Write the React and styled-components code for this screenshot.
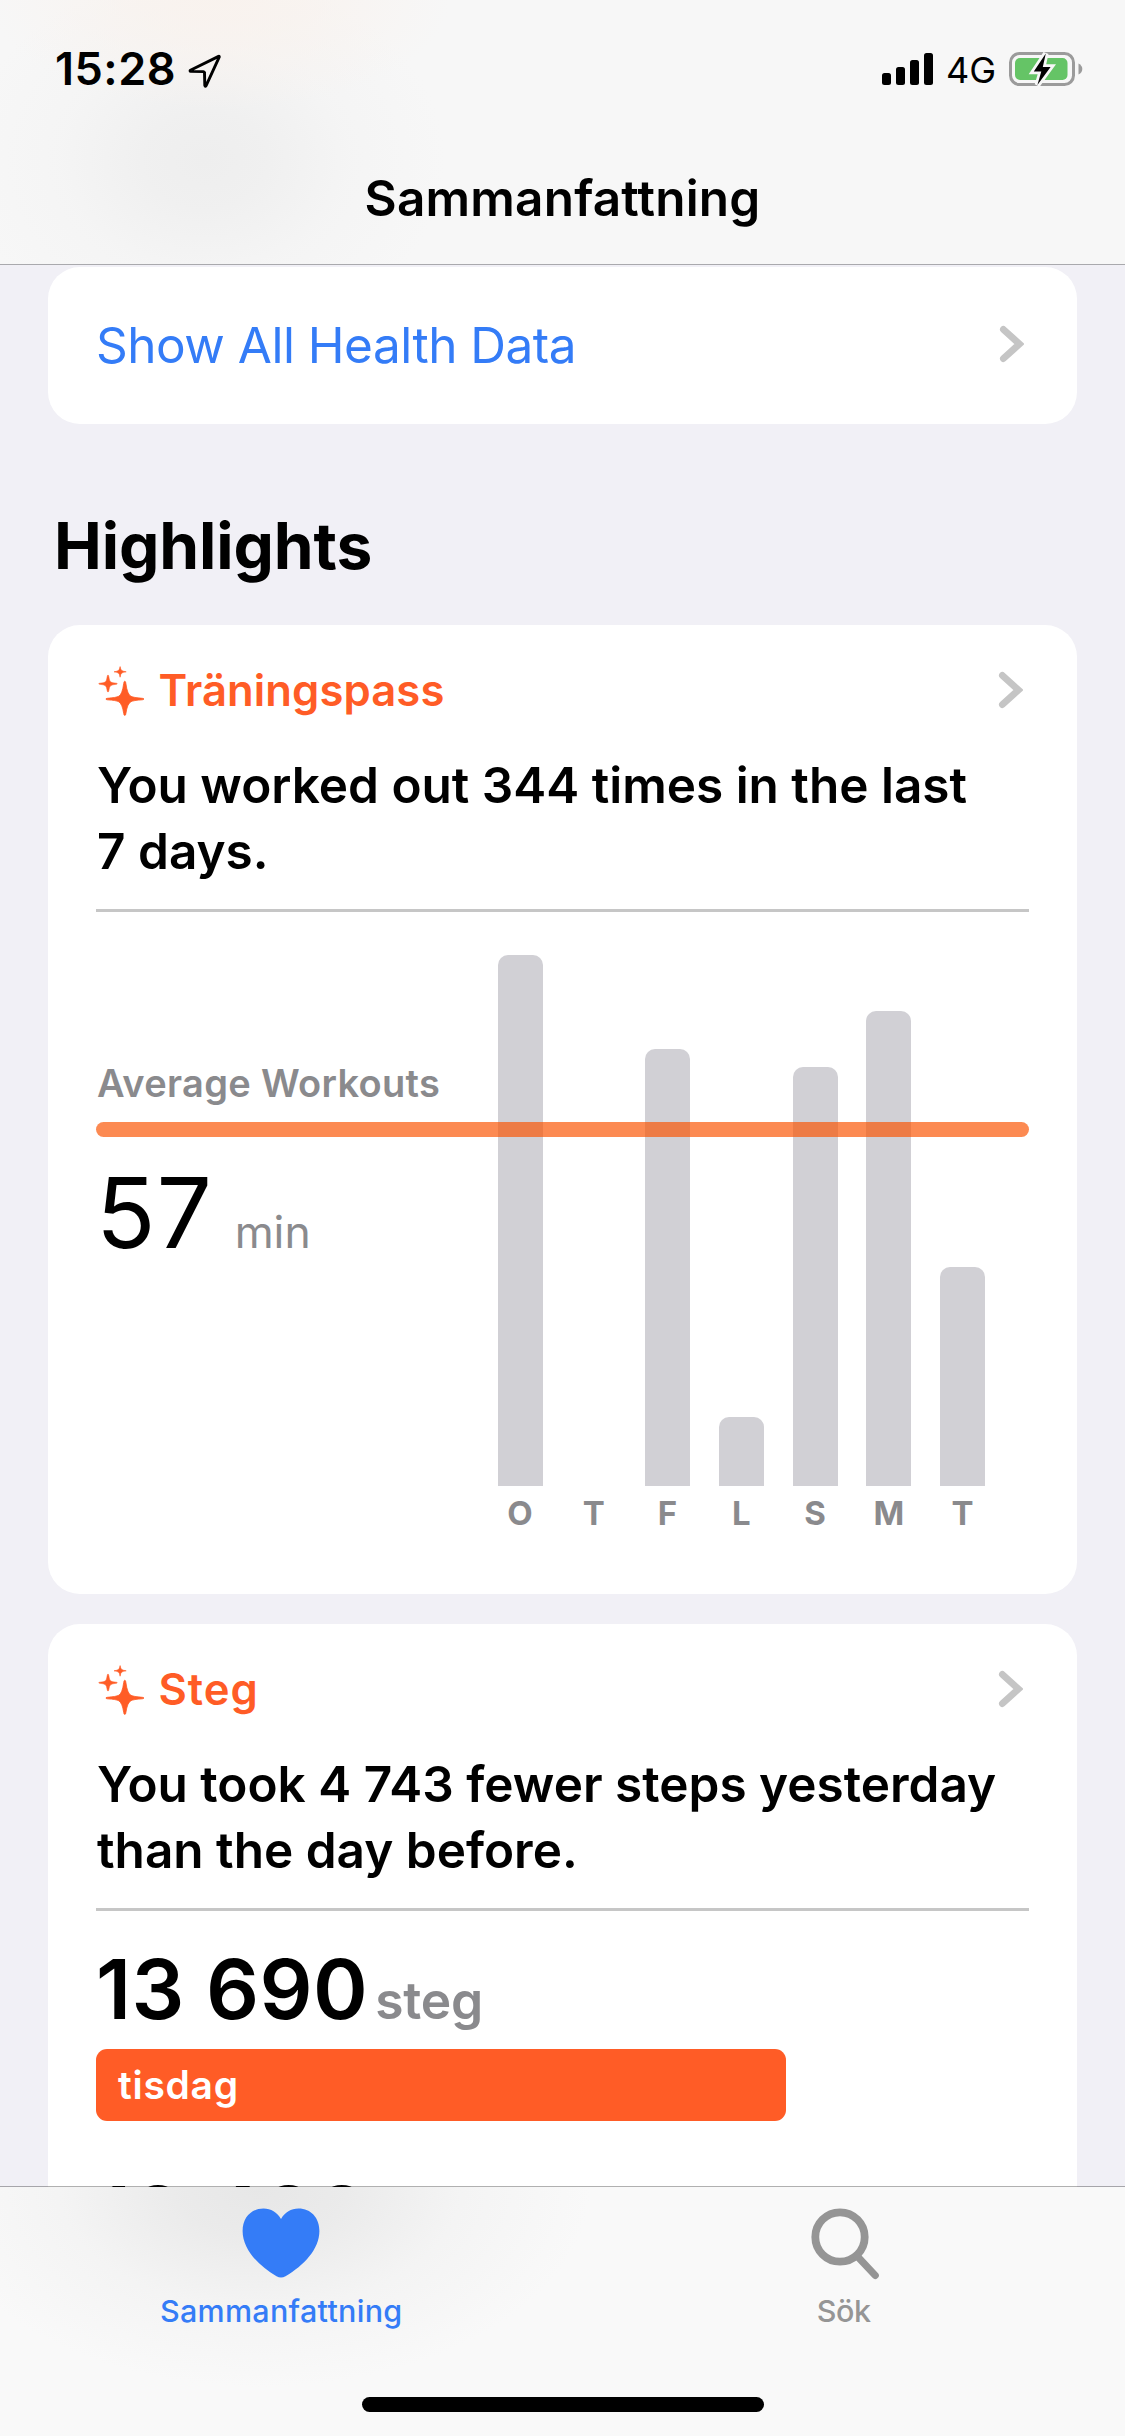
import React from "react";
import styled, { createGlobalStyle } from "styled-components";

const orange = "#ff5c26";
const blue = "#347cf7";
const gray = "#8a8a8d";

const GlobalStyle = createGlobalStyle`
  * { box-sizing: border-box; }
  body {
    margin: 0;
    background: #f1f0f6;
    font-family: Inter, Roboto, "Liberation Sans", sans-serif;
    color: #000;
  }
  svg { display: block; flex: none; }
`;

const Screen = styled.div`
  width: 1125px;
  height: 2436px;
  display: flex;
  flex-direction: column;
  overflow: hidden;
  background: #f1f0f6;
`;

const NavBar = styled.header`
  flex: none;
  height: 265px;
  border-bottom: 1px solid #a9a9ad;
  background:
    radial-gradient(ellipse 230px 110px at 220px 0, rgba(249, 242, 237, 0.9), rgba(249, 242, 237, 0.7) 35%, rgba(248, 245, 243, 0) 100%),
    radial-gradient(ellipse 240px 190px at 205px 160px, #eeeeee, rgba(239, 239, 239, 0.9) 25%, rgba(243, 243, 243, 0.6) 60%, rgba(247, 247, 247, 0) 100%),
    #f7f7f7;
`;

const StatusBar = styled.div`
  height: 138px;
  padding: 0 42px 0 55px;
  display: flex;
  align-items: center;
  justify-content: space-between;
`;

const StatusGroup = styled.div`
  display: flex;
  align-items: center;
  gap: ${(p) => p.$gap}px;
`;

const Time = styled.span`
  font-size: 45px;
  font-weight: 600;
  line-height: 54px;
  letter-spacing: 0.5px;
`;

const Network = styled.span`
  font-size: 36px;
  line-height: 44px;
  padding-top: 2px;
`;

const NavTitle = styled.h1`
  margin: 0;
  height: 120px;
  line-height: 120px;
  text-align: center;
  font-size: 49.5px;
  font-weight: 600;
  letter-spacing: 0.2px;
`;

const Content = styled.main`
  flex: 1;
  min-height: 0;
  overflow: hidden;
  padding: 2px 48px 0;
`;

const Card = styled.section`
  height: ${(p) => p.$height}px;
  margin-bottom: ${(p) => p.$after || 0}px;
  padding: 0 48px;
  border-radius: 32px;
  background: #fff;
`;

const LinkCard = styled(Card)`
  display: flex;
  align-items: center;
  justify-content: space-between;
  padding: 0 53px 1px 48px;
`;

const LinkText = styled.span`
  font-size: 49.5px;
  line-height: 60px;
  letter-spacing: -0.5px;
  color: ${blue};
`;

const SectionTitle = styled.h2`
  margin: 83px 0 40px;
  padding-left: 6px;
  font-size: 64px;
  line-height: 78px;
  font-weight: 700;
  letter-spacing: -0.1px;
`;

const CardHeader = styled.div`
  height: 96px;
  padding: 36px 6px 0 2px;
  display: flex;
  align-items: center;
`;

const Category = styled.span`
  flex: 1;
  margin-left: 14.5px;
  font-size: 43.6px;
  line-height: 60px;
  font-weight: 600;
  letter-spacing: ${(p) => p.$spacing || 0.1}px;
  color: ${orange};
`;

const Summary = styled.p`
  margin: 31px 0 25px;
  padding-left: 1px;
  font-size: 49.5px;
  line-height: 66px;
  font-weight: 600;
  white-space: nowrap;
`;

const Divider = styled.div`
  height: 3px;
  background: #c6c6c6;
`;

const Workouts = styled.div`
  position: relative;
  display: flex;
`;

const Average = styled.div`
  width: 401.5px;
  padding-top: 148px;
`;

const AverageLabel = styled.div`
  padding-left: 1px;
  font-size: 38px;
  line-height: 46px;
  font-weight: 600;
  letter-spacing: 0.3px;
  color: ${gray};
`;

const AverageValue = styled.div`
  height: 100px;
  margin-top: 57px;
  display: flex;
  align-items: baseline;
  line-height: 100px;
  font-size: 98px;
  letter-spacing: 0.8px;
`;

const Unit = styled.span`
  margin-left: 22px;
  font-size: 44.5px;
  line-height: 1;
  letter-spacing: 0;
  color: ${gray};
`;

const AverageLine = styled.div`
  position: absolute;
  left: 0;
  right: 0;
  top: 210px;
  height: 15px;
  border-radius: 7.5px;
  background: rgba(251, 82, 0, 0.68);
`;

const Bars = styled.div`
  padding-top: 43px;
  display: flex;
  gap: 28.75px;
`;

const Day = styled.div`
  width: 45px;
  display: flex;
  flex-direction: column;
  align-items: center;
`;

const Track = styled.div`
  width: 100%;
  height: 531px;
  display: flex;
  align-items: flex-end;
`;

const Bar = styled.div`
  width: 100%;
  border-radius: 10px 10px 0 0;
  background: #d1d0d5;
`;

const DayLabel = styled.span`
  margin-top: 6.5px;
  font-size: 33px;
  line-height: 40px;
  font-weight: 650;
  color: ${gray};
`;

const StepCount = styled.div`
  height: 100px;
  margin-top: ${(p) => p.$before}px;
  display: flex;
  align-items: baseline;
  font-size: 83px;
  line-height: 100px;
  font-weight: 600;
  letter-spacing: 0.4px;
`;

const StepUnit = styled.span`
  margin-left: 7px;
  font-size: 51.5px;
  line-height: 1;
  letter-spacing: -0.2px;
  color: ${gray};
`;

const StepBar = styled.div`
  width: 690px;
  height: 72px;
  margin-top: 10px;
  padding-left: 22px;
  border-radius: 11px;
  background: ${orange};
  color: #fff;
  font-size: 39px;
  line-height: 72px;
  font-weight: 600;
  letter-spacing: 0.7px;
`;

const TabBar = styled.nav`
  flex: none;
  position: relative;
  height: 250px;
  margin-top: -1px;
  border-top: 1px solid rgba(0, 0, 0, 0.31);
  background:
    radial-gradient(ellipse 330px 200px at 260px 0, #e7e7e7, rgba(233, 233, 233, 0.9) 25%, rgba(241, 241, 241, 0.65) 60%, rgba(249, 249, 249, 0) 100%),
    #f9f9f9;
  background-clip: padding-box;
  display: flex;
  flex-direction: column;
  align-items: center;
`;

const Tabs = styled.div`
  width: 100%;
  height: 210px;
  display: flex;
`;

const Tab = styled.div`
  flex: 1;
  padding-top: 21px;
  display: flex;
  flex-direction: column;
  align-items: center;
  color: ${(p) => (p.$active ? blue : "#959595")};
`;

const TabLabel = styled.span`
  margin-top: 13px;
  font-size: 30.5px;
  line-height: 36px;
  font-weight: 500;
  letter-spacing: ${(p) => p.$spacing}px;
`;

const HomeIndicator = styled.div`
  width: 402px;
  height: 15px;
  border-radius: 7.5px;
  background: #000;
`;

const LocationIcon = () => (
  <svg width="33" height="37" viewBox="0 -3 33 37">
    <path
      d="M30.6 2.4 L2.4 16.2 Q1.6 17.2 2.8 17.4 L15.3 17.6 Q16.5 17.7 16.5 18.9 L16.8 31.5 Q17.2 33 18 31.8 L31.2 3.2 Q31.4 2.1 30.6 2.4 Z"
      fill="none"
      stroke="#000"
      strokeWidth="2.9"
      strokeLinejoin="round"
    />
  </svg>
);

const SignalIcon = () => (
  <svg width="51" height="32" viewBox="0 0 51 32">
    <rect x="0" y="20" width="9" height="12" rx="2.5" />
    <rect x="14" y="14" width="9" height="18" rx="2.5" />
    <rect x="28" y="7" width="9" height="25" rx="2.5" />
    <rect x="42" y="0" width="9" height="32" rx="2.5" />
  </svg>
);

const BatteryIcon = () => (
  <svg width="74" height="36" viewBox="0 0 74 36">
    <rect x="1.5" y="2.5" width="63" height="31" rx="9" fill="none" stroke="#9b9b9b" strokeWidth="3" />
    <path d="M69.5 12.5 Q73.3 14.5 73.3 18 Q73.3 21.5 69.5 23.5 Z" fill="#9b9b9b" />
    <rect x="6" y="7" width="52.5" height="22" rx="5" fill="#65c466" />
    <path
      d="M36.8 2.5 L24.8 20.6 H32.3 L28.4 34 L41.6 16 H33.8 Z"
      fill="#000"
      stroke="#f7f7f7"
      strokeWidth="5.5"
      paintOrder="stroke"
    />
  </svg>
);

const Chevron = () => (
  <svg width="25" height="40" viewBox="0 0 25 40">
    <path d="M4.4 4.4 L20.4 19 L4.4 33.6" fill="none" stroke="#c5c5c5" strokeWidth="6.8" strokeLinecap="round" />
  </svg>
);

const Sparkles = () => (
  <svg width="46" height="50" viewBox="0 0 46 50" fill={orange}>
    <path d="M26.8 15.2 Q27.7 15.2 27.9 17.5 Q29.3 28.6 33 30.3 Q35.3 31.6 44.3 32.3 Q46 32.5 46 33 Q46 33.6 44.3 33.8 Q35.3 34.4 33 35.7 Q29.3 37.6 27.9 47.5 Q27.7 49.5 26.8 49.5 Q25.9 49.5 25.7 47.5 Q24.3 37.6 20.6 35.7 Q18.3 34.4 9.3 33.8 Q7.8 33.6 7.8 33 Q7.8 32.5 9.3 32.3 Q18.3 31.6 20.6 30.3 Q24.3 28.6 25.7 17.5 Q25.9 15.2 26.8 15.2 Z" stroke={orange} strokeWidth="0.8" />
    <path d="M10 9 Q10.6 9 10.8 10.5 Q11.4 15.2 12.9 16.1 Q14.2 16.9 18.3 17.2 Q19.3 17.4 19.3 17.8 Q19.3 18.2 18.3 18.3 Q14.2 18.7 12.9 19.5 Q11.4 20.4 10.8 24.8 Q10.6 26 10 26 Q9.4 26 9.2 24.8 Q8.6 20.4 7.1 19.5 Q5.8 18.7 1.7 18.3 Q0.7 18.2 0.7 17.8 Q0.7 17.4 1.7 17.2 Q5.8 16.9 7.1 16.1 Q8.6 15.2 9.2 10.5 Q9.4 9 10 9 Z" stroke={orange} strokeWidth="0.5" />
    <path d="M22.1 0.6 Q22.6 3.8 23.8 4.6 Q25 5.3 28.2 5.8 Q25 6.3 23.8 7 Q22.6 7.8 22.1 11.2 Q21.6 7.8 20.4 7 Q19.2 6.3 16 5.8 Q19.2 5.3 20.4 4.6 Q21.6 3.8 22.1 0.6 Z" stroke={orange} strokeWidth="0.6" />
  </svg>
);

const HeartIcon = () => (
  <svg width="78" height="72" viewBox="0 0 78 72">
    <path
      d="M39 11 C43 4.5 49 0.6 56.5 0.6 C69 0.6 77.4 10 77.4 23 C77.4 41 62 57.5 43.5 68.2 Q39 70.8 34.5 68.2 C16 57.5 0.6 41 0.6 23 C0.6 10 9 0.6 21.5 0.6 C29 0.6 35 4.5 39 11 Z"
      fill={blue}
    />
  </svg>
);

const SearchIcon = () => (
  <svg width="70" height="72" viewBox="0 0 70 72">
    <g transform="translate(2 0)" fill="none" stroke="#959595">
      <circle cx="29" cy="29" r="24.7" strokeWidth="7.8" />
      <path d="M46.5 48.5 L64.2 67.4" strokeWidth="7.2" strokeLinecap="round" />
    </g>
  </svg>
);

const week = [
  { day: "O", height: 531 },
  { day: "T", height: 0 },
  { day: "F", height: 437.5 },
  { day: "L", height: 69 },
  { day: "S", height: 419 },
  { day: "M", height: 475 },
  { day: "T", height: 219 },
];

export default function App() {
  return (
    <Screen>
      <GlobalStyle />
      <NavBar>
        <StatusBar>
          <StatusGroup $gap={12}>
            <Time>15:28</Time>
            <LocationIcon />
          </StatusGroup>
          <StatusGroup $gap={13}>
            <SignalIcon />
            <Network>4G</Network>
            <BatteryIcon />
          </StatusGroup>
        </StatusBar>
        <NavTitle>Sammanfattning</NavTitle>
      </NavBar>

      <Content>
        <LinkCard $height={157}>
          <LinkText>Show All Health Data</LinkText>
          <Chevron />
        </LinkCard>

        <SectionTitle>Highlights</SectionTitle>

        <Card $height={969} $after={30}>
          <CardHeader>
            <Sparkles />
            <Category>Träningspass</Category>
            <Chevron />
          </CardHeader>
          <Summary>
            You worked out 344 times in the last
            <br />7 days.
          </Summary>
          <Divider />
          <Workouts>
            <Average>
              <AverageLabel>Average Workouts</AverageLabel>
              <AverageValue>
                57<Unit>min</Unit>
              </AverageValue>
            </Average>
            <Bars>
              {week.map(({ day, height }, i) => (
                <Day key={i}>
                  <Track>
                    <Bar style={{ height }} />
                  </Track>
                  <DayLabel>{day}</DayLabel>
                </Day>
              ))}
            </Bars>
            <AverageLine />
          </Workouts>
        </Card>

        <Card $height={969}>
          <CardHeader>
            <Sparkles />
            <Category $spacing={1}>Steg</Category>
            <Chevron />
          </CardHeader>
          <Summary>
            You took 4&nbsp;743 fewer steps yesterday
            <br />
            than the day before.
          </Summary>
          <Divider />
          <StepCount $before={28}>
            13&nbsp;690<StepUnit>steg</StepUnit>
          </StepCount>
          <StepBar>tisdag</StepBar>
          <StepCount $before={45}>18&nbsp;433</StepCount>
        </Card>
      </Content>

      <TabBar>
        <Tabs>
          <Tab $active>
            <HeartIcon />
            <TabLabel $spacing={0.3}>Sammanfattning</TabLabel>
          </Tab>
          <Tab>
            <SearchIcon />
            <TabLabel $spacing={-0.4}>Sök</TabLabel>
          </Tab>
        </Tabs>
        <HomeIndicator />
      </TabBar>
    </Screen>
  );
}
